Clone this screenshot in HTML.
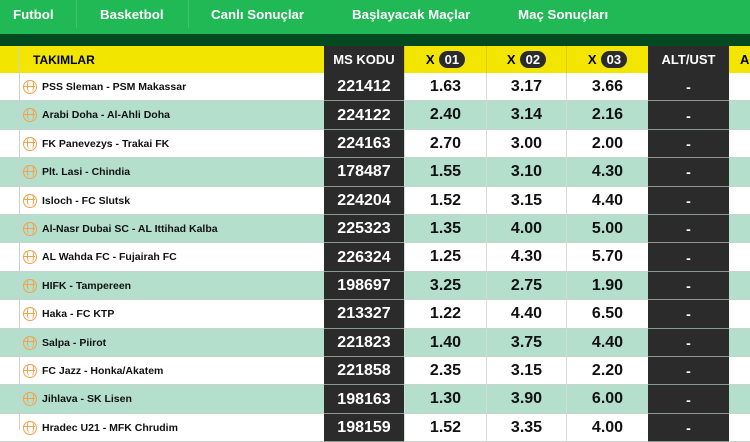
<!DOCTYPE html>
<html><head><meta charset="utf-8"><style>
*{margin:0;padding:0;box-sizing:border-box}
body{width:750px;height:430px;overflow:hidden;background:#fff;font-family:"Liberation Sans",Arial,sans-serif;position:relative}
.nav{position:absolute;left:0;top:0;width:750px;height:34px;background:#20b956}
.nav span{position:absolute;top:7px;color:#fff;font-weight:bold;font-size:13.3px}
.sep{position:absolute;top:0;width:1px;height:28px;background:#3cc46c}
.band{position:absolute;left:0;top:34px;width:750px;height:12px;background:#034a20}
.c{position:absolute;display:flex;align-items:center;justify-content:center;font-weight:bold}
.row{position:absolute;left:0;width:750px;height:28.4px;border-bottom:1px solid #c9d3ce}
.pill{display:inline-block;background:#2b2b2b;color:#fff;border-radius:9px;font-size:13px;padding:1px 6px;margin-left:4px;line-height:15px}
.ball{display:inline-block;width:14px;height:14px;border:1.8px solid #f5a04a;border-radius:50%;position:relative;margin-right:5px;vertical-align:middle}
.ball:before{content:"";position:absolute;left:3px;top:-1px;width:4.5px;height:12px;border-left:1.5px solid #f5a04a;border-right:1.5px solid #f5a04a;border-radius:40%}
.ball:after{content:"";position:absolute;left:-1px;top:4.5px;width:12px;height:0;border-top:1.5px solid #f5a04a}
</style></head><body>
<div class="nav">
<span style="left:13px">Futbol</span><div class="sep" style="left:76px"></div>
<span style="left:100px">Basketbol</span><div class="sep" style="left:188px"></div>
<span style="left:211px">Canlı Sonuçlar</span>
<span style="left:352px">Başlayacak Maçlar</span>
<span style="left:518px">Maç Sonuçları</span>
</div>
<div class="band"></div>
<div style="position:absolute;left:0;top:46px;width:750px;height:27px;background:#f2e500"></div>
<div style="position:absolute;left:19px;top:46px;width:1px;height:384px;background:#c9d3ce;z-index:2"></div>
<div class="c" style="left:33px;top:46px;height:27px;font-size:12px">TAKIMLAR</div>
<div class="c" style="left:324px;top:46px;width:80px;height:27px;background:#2b2b2b;color:#fff;font-size:13px">MS KODU</div>
<div class="c" style="left:404px;top:46px;width:82px;height:27px;font-size:13px;border-left:1px solid #d8cc00">X<span class="pill">01</span></div>
<div class="c" style="left:486px;top:46px;width:80px;height:27px;font-size:13px;border-left:1px solid #d8cc00">X<span class="pill">02</span></div>
<div class="c" style="left:566px;top:46px;width:82px;height:27px;font-size:13px;border-left:1px solid #d8cc00">X<span class="pill">03</span></div>
<div class="c" style="left:648px;top:46px;width:81px;height:27px;background:#2b2b2b;color:#fff;font-size:13px">ALT/UST</div>
<div class="c" style="left:740px;top:46px;height:27px;font-size:13px">A</div>
<div id="rows"></div>
<script>
var d=[["PSS Sleman - PSM Makassar","221412","1.63","3.17","3.66"],["Arabi Doha - Al-Ahli Doha","224122","2.40","3.14","2.16"],["FK Panevezys - Trakai FK","224163","2.70","3.00","2.00"],["Plt. Lasi - Chindia","178487","1.55","3.10","4.30"],["Isloch - FC Slutsk","224204","1.52","3.15","4.40"],["Al-Nasr Dubai SC - AL Ittihad Kalba","225323","1.35","4.00","5.00"],["AL Wahda FC - Fujairah FC","226324","1.25","4.30","5.70"],["HIFK - Tampereen","198697","3.25","2.75","1.90"],["Haka - FC KTP","213327","1.22","4.40","6.50"],["Salpa - Piirot","221823","1.40","3.75","4.40"],["FC Jazz - Honka/Akatem","221858","2.35","3.15","2.20"],["Jihlava - SK Lisen","198163","1.30","3.90","6.00"],["Hradec U21 - MFK Chrudim","198159","1.52","3.35","4.00"]];
var h="";
d.forEach(function(r,i){var t=73+i*28.4;var bg=i%2?"#b3dfcc":"#fff";
h+='<div class="row" style="top:'+t+'px;background:'+bg+'"></div>';
h+='<div class="c" style="left:23px;top:'+t+'px;height:28px;font-size:10.5px;color:#111"><span class="ball"></span>'+r[0]+'</div>';
h+='<div class="c" style="left:324px;top:'+t+'px;width:80px;height:28.4px;background:#2b2b2b;color:#fff;font-size:16px;box-shadow:inset 0 -1px 0 #8a9a92">'+r[1]+'</div>';
var xs=[404,486,566],ws=[82,80,82];
for(var k=0;k<3;k++)h+='<div class="c" style="left:'+xs[k]+'px;top:'+t+'px;width:'+ws[k]+'px;height:28px;font-size:16px;color:#111;border-left:1px solid #d3ddd8">'+r[2+k]+'</div>';
h+='<div class="c" style="left:648px;top:'+t+'px;width:81px;height:28.4px;background:#2b2b2b;color:#fff;font-size:14px;box-shadow:inset 0 -1px 0 #8a9a92">-</div>';
});
document.getElementById("rows").innerHTML=h;
</script>
</body></html>
